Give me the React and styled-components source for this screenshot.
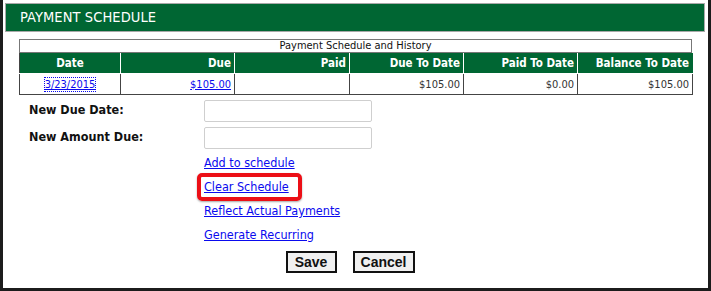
import React from "react";
import styled, { createGlobalStyle } from "styled-components";

const GlobalStyle = createGlobalStyle`
  html, body {
    margin: 0;
    padding: 0;
    background: #ffffff;
  }
  body {
    font-family: "DejaVu Sans Condensed", "DejaVu Sans", sans-serif;
  }
`;

const green = "#006633";
const linkBlue = "#0a0aee";

const Frame = styled.div`
  width: 711px;
  height: 291px;
  box-sizing: border-box;
  border: 3px solid #1c1c1c;
  border-top: none;
  padding: 3px 3px 0 2px;
  background: #fff;
`;

const Header = styled.div`
  height: 29px;
  box-sizing: border-box;
  border: 1px solid #a9a9a9;
  background: ${green};
  color: #fff;
  font-size: 14.5px;
  line-height: 27px;
  padding-left: 14px;
  letter-spacing: 0.1px;
`;

const Body = styled.div`
  padding: 7px 0 0 14px;
`;

const HistoryBox = styled.div`
  width: 673px;
`;

const Caption = styled.div`
  height: 14px;
  box-sizing: border-box;
  border: 1px solid #777;
  font-size: 11px;
  line-height: 12px;
  text-align: center;
  color: #111;
`;

const Table = styled.table`
  width: 673px;
  border-collapse: collapse;
  table-layout: fixed;
  font-size: 11px;
`;

const Th = styled.th`
  background: ${green};
  color: #fff;
  font-weight: bold;
  font-size: 11.5px;
  height: 20px;
  padding: 0 3px;
  text-align: ${(p) => p.$align || "right"};
  border-left: 1px solid #fff;
  border-bottom: 1px solid #fff;
  &:first-child {
    border-left: 1px solid #444;
  }
  &:last-child {
    border-right: 1px solid ${green};
  }
`;

const Td = styled.td`
  height: 20px;
  padding: 0 3px;
  border: 1px solid #444;
  text-align: ${(p) => p.$align || "right"};
  color: #333;
`;

const Link = styled.a`
  color: ${linkBlue};
  text-decoration: underline;
  cursor: pointer;
  ${(p) => p.$focused && `outline: 1px dotted ${linkBlue}; outline-offset: 0;`}
`;

const Form = styled.div`
  display: grid;
  grid-template-columns: 175px 168px;
  grid-auto-rows: 22px;
  row-gap: 5px;
  margin: 5px 0 0 10px;
`;

const Label = styled.label`
  font-weight: bold;
  font-size: 12.5px;
  color: #111;
  align-self: center;
  line-height: 16px;
  margin-top: -2px;
`;

const Input = styled.input`
  box-sizing: border-box;
  width: 168px;
  height: 22px;
  border: 1px solid #cfcfcf;
  border-radius: 2px;
  background: #fff;
  margin: 0;
`;

const Actions = styled.div`
  display: flex;
  flex-direction: column;
  margin: 2px 0 0 185px;
`;

const ActionRow = styled.div`
  height: 24px;
  line-height: 24px;
  font-size: 12.5px;
`;

const Highlight = styled.span`
  position: relative;
  &::after {
    content: "";
    position: absolute;
    left: -7px;
    right: -13px;
    top: -6px;
    bottom: -7px;
    border: 4px solid #ec0f16;
    border-radius: 5px;
    box-shadow: 0 1px 2px rgba(0, 0, 0, 0.35);
    pointer-events: none;
  }
`;

const Buttons = styled.div`
  display: flex;
  justify-content: center;
  gap: 16px;
  margin-top: 4px;
  padding-right: 10px;
`;

const Button = styled.button`
  box-sizing: border-box;
  height: 22px;
  width: ${(p) => p.$width}px;
  border: 2px solid #111;
  background: #f0f0f0;
  font-family: "Liberation Sans", Arial, sans-serif;
  font-weight: bold;
  font-size: 14px;
  color: #111;
  padding: 0;
  line-height: 18px;
`;

const columns = [
  { title: "Date", width: 101, align: "center" },
  { title: "Due", width: 114 },
  { title: "Paid", width: 115 },
  { title: "Due To Date", width: 114 },
  { title: "Paid To Date", width: 114 },
  { title: "Balance To Date", width: 115 },
];

export default function App() {
  return (
    <>
      <GlobalStyle />
      <Frame>
        <Header>PAYMENT SCHEDULE</Header>
        <Body>
          <HistoryBox>
            <Caption>Payment Schedule and History</Caption>
            <Table>
              <colgroup>
                {columns.map((c) => (
                  <col key={c.title} style={{ width: c.width }} />
                ))}
              </colgroup>
              <thead>
                <tr>
                  {columns.map((c) => (
                    <Th key={c.title} $align={c.align}>
                      {c.title}
                    </Th>
                  ))}
                </tr>
              </thead>
              <tbody>
                <tr>
                  <Td $align="center">
                    <Link $focused>3/23/2015</Link>
                  </Td>
                  <Td>
                    <Link>$105.00</Link>
                  </Td>
                  <Td></Td>
                  <Td>$105.00</Td>
                  <Td>$0.00</Td>
                  <Td>$105.00</Td>
                </tr>
              </tbody>
            </Table>
          </HistoryBox>
          <Form>
            <Label>New Due Date:</Label>
            <Input type="text" />
            <Label>New Amount Due:</Label>
            <Input type="text" />
          </Form>
          <Actions>
            <ActionRow>
              <Link>Add to schedule</Link>
            </ActionRow>
            <ActionRow>
              <Highlight>
                <Link>Clear Schedule</Link>
              </Highlight>
            </ActionRow>
            <ActionRow>
              <Link>Reflect Actual Payments</Link>
            </ActionRow>
            <ActionRow>
              <Link>Generate Recurring</Link>
            </ActionRow>
          </Actions>
        </Body>
        <Buttons>
          <Button $width={51}>Save</Button>
          <Button $width={62}>Cancel</Button>
        </Buttons>
      </Frame>
    </>
  );
}
